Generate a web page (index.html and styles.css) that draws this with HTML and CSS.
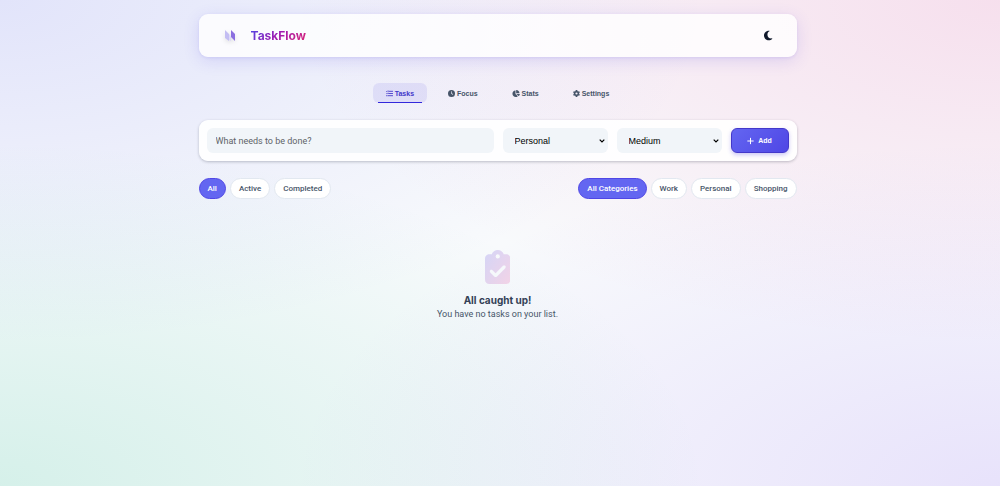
FILE: index.html
```html
<!DOCTYPE html>
<html lang="en">
<head>
    <meta charset="UTF-8">
    <meta name="viewport" content="width=device-width, initial-scale=1.0">
    <title>TaskFlow</title>
    <link rel="stylesheet" href="styles.css">
</head>
<body>
<div class="container">
    <header class="header">
        <div class="brand">
            <svg class="logo" viewBox="0 0 20 20" aria-hidden="true">
                <path d="M5 4l4 4v7l-4-3z" fill="#c3bdf3"/>
                <path d="M9 8l2 3v4l-2-1z" fill="#dcd9f8"/>
                <path d="M11 4l4 4v7l-4-4z" fill="#8b6fe0"/>
            </svg>
            <h1>TaskFlow</h1>
        </div>
        <button class="theme-toggle" type="button" aria-label="Toggle theme">
            <svg viewBox="0 0 384 512"><path d="M223.5 32C100 32 0 132.3 0 256S100 480 223.5 480c60.6 0 115.5-24.2 155.8-63.4c5-4.9 6.3-12.5 3.1-18.7s-10.1-9.7-17-8.5c-9.8 1.7-19.8 2.6-30.1 2.6c-96.9 0-175.5-78.8-175.5-176c0-65.8 36-123.1 89.3-153.3c6.1-3.5 9.2-10.5 7.7-17.3s-7.3-11.9-14.3-12.5c-6.3-.5-12.6-.8-19-.8z"/></svg>
        </button>
    </header>

    <nav class="tabs">
        <button class="tab active" type="button">
            <svg viewBox="0 0 512 512"><path d="M192 96h288M192 256h288M160 416h320" fill="none" stroke="currentColor" stroke-width="64" stroke-linecap="round"/><path d="M24 96l40 40 64-80M24 256l40 40 64-80" fill="none" stroke="currentColor" stroke-width="48" stroke-linecap="round" stroke-linejoin="round"/><circle cx="64" cy="416" r="44"/></svg>
            Tasks
        </button>
        <button class="tab" type="button">
            <svg viewBox="0 0 512 512"><path fill-rule="evenodd" d="M256 0a256 256 0 1 1 0 512A256 256 0 1 1 256 0zM232 120V256c0 8 4 15.5 10.7 20l96 64c11 7.4 25.9 4.4 33.3-6.7s4.4-25.9-6.7-33.3L280 243.2V120c0-13.3-10.7-24-24-24s-24 10.7-24 24z"/></svg>
            Focus
        </button>
        <button class="tab" type="button">
            <svg viewBox="0 0 576 512"><path d="M304 240V16.6c0-9 7-16.6 16-16.6C443.7 0 544 100.3 544 224c0 9-7.6 16-16.6 16H304zM32 272C32 150.7 122.1 50.3 239 34.3c9.2-1.3 17 6.1 17 15.4V288L412.5 444.5c6.7 6.7 6.2 17.7-1.5 23.1C371.8 495.6 323.8 512 272 512C139.5 512 32 404.6 32 272zm526.4 16c9.3 0 16.6 7.8 15.4 17c-7.7 55.9-34.6 105.6-73.9 142.3c-6 5.6-15.4 5.2-21.2-.7L320 288H558.4z"/></svg>
            Stats
        </button>
        <button class="tab" type="button">
            <svg viewBox="0 0 512 512"><path d="M495.9 166.6c3.2 8.7 .5 18.4-6.4 24.6l-43.3 39.4c1.1 8.3 1.7 16.8 1.7 25.4s-.6 17.1-1.7 25.4l43.3 39.4c6.9 6.2 9.6 15.9 6.4 24.6c-4.4 11.9-9.7 23.3-15.8 34.3l-4.7 8.1c-6.6 11-14 21.4-22.1 31.2c-5.9 7.2-15.7 9.6-24.5 6.8l-55.7-17.7c-13.4 10.3-28.2 18.9-44 25.4l-12.5 57.1c-2 9.1-9 16.3-18.2 17.8c-13.8 2.3-28 3.5-42.5 3.5s-28.7-1.2-42.5-3.5c-9.2-1.5-16.2-8.7-18.2-17.8l-12.5-57.1c-15.8-6.5-30.6-15.1-44-25.4L83.1 425.9c-8.8 2.8-18.6 .3-24.5-6.8c-8.1-9.8-15.5-20.2-22.1-31.2l-4.7-8.1c-6.1-11-11.4-22.4-15.8-34.3c-3.2-8.7-.5-18.4 6.4-24.6l43.3-39.4C64.6 273.1 64 264.6 64 256s.6-17.1 1.7-25.4L22.4 191.2c-6.9-6.2-9.6-15.9-6.4-24.6c4.4-11.9 9.7-23.3 15.8-34.3l4.7-8.1c6.6-11 14-21.4 22.1-31.2c5.9-7.2 15.7-9.6 24.5-6.8l55.7 17.7c13.4-10.3 28.2-18.9 44-25.4l12.5-57.1c2-9.1 9-16.3 18.2-17.8C227.3 1.2 241.5 0 256 0s28.7 1.2 42.5 3.5c9.2 1.5 16.2 8.7 18.2 17.8l12.5 57.1c15.8 6.5 30.6 15.1 44 25.4l55.7-17.7c8.8-2.8 18.6-.3 24.5 6.8c8.1 9.8 15.5 20.2 22.1 31.2l4.7 8.1c6.1 11 11.4 22.4 15.8 34.3zM256 336a80 80 0 1 0 0-160 80 80 0 1 0 0 160z"/></svg>
            Settings
        </button>
    </nav>

    <main>
        <form class="task-form">
            <input type="text" class="task-input" placeholder="What needs to be done?" aria-label="New task">
            <select class="task-select" aria-label="Category">
                <option>Work</option>
                <option selected>Personal</option>
                <option>Shopping</option>
            </select>
            <select class="task-select" aria-label="Priority">
                <option>Low</option>
                <option selected>Medium</option>
                <option>High</option>
            </select>
            <button class="add-btn" type="button">
                <svg viewBox="0 0 448 512"><path d="M224 80v352M48 256h352" fill="none" stroke="currentColor" stroke-width="64" stroke-linecap="round"/></svg>
                Add
            </button>
        </form>

        <div class="filters">
            <div class="filter-group">
                <button class="pill active" type="button">All</button>
                <button class="pill" type="button">Active</button>
                <button class="pill" type="button">Completed</button>
            </div>
            <div class="filter-group">
                <button class="pill active" type="button">All Categories</button>
                <button class="pill" type="button">Work</button>
                <button class="pill" type="button">Personal</button>
                <button class="pill" type="button">Shopping</button>
            </div>
        </div>

        <section class="empty-state">
            <svg viewBox="0 0 384 512" aria-hidden="true">
                <defs>
                    <linearGradient id="clip" x1="0" y1="0" x2="1" y2="1">
                        <stop offset="0" stop-color="#4f46e5"/>
                        <stop offset="1" stop-color="#ec4899"/>
                    </linearGradient>
                </defs>
                <path fill="url(#clip)" d="M192 0c-41.8 0-77.4 26.7-90.5 64H64C28.7 64 0 92.7 0 128V448c0 35.3 28.7 64 64 64H320c35.3 0 64-28.7 64-64V128c0-35.3-28.7-64-64-64H282.5C269.4 26.7 233.8 0 192 0zm0 64a32 32 0 1 1 0 64 32 32 0 1 1 0-64zM305 273L177 401c-9.4 9.4-24.6 9.4-33.9 0L79 337c-9.4-9.4-9.4-24.6 0-33.9s24.6-9.4 33.9 0l47 47L271 239c9.4-9.4 24.6-9.4 33.9 0s9.4 24.6 0 33.9z"/>
            </svg>
            <h2>All caught up!</h2>
            <p>You have no tasks on your list.</p>
        </section>
    </main>
</div>
</body>
</html>
```
FILE: styles.css
```css
* {
    box-sizing: border-box;
    margin: 0;
    padding: 0;
}

body {
    min-height: 100vh;
    padding: 14px 5px 14px 0;
    font-family: Inter, sans-serif;
    font-size: 8px;
    color: #334155;
    background:
        radial-gradient(at 0% 0%, rgba(99, 102, 241, 0.15) 0, transparent 50%),
        radial-gradient(at 100% 0%, rgba(236, 72, 153, 0.15) 0, transparent 50%),
        radial-gradient(at 100% 100%, rgba(139, 92, 246, 0.15) 0, transparent 50%),
        radial-gradient(at 0% 100%, rgba(16, 185, 129, 0.15) 0, transparent 50%),
        #f8fafc;
}

button, input, select {
    font-family: "Liberation Sans", Arial, sans-serif;
    border: none;
}

button {
    cursor: pointer;
}

svg {
    fill: currentColor;
}

.container {
    max-width: 598px;
    margin: 0 auto;
}

.header {
    display: flex;
    justify-content: space-between;
    align-items: center;
    height: 43px;
    padding: 0 21px;
    border-radius: 9px;
    background: rgba(255, 255, 255, 0.8);
    box-shadow: 0 4px 16px rgba(79, 70, 229, 0.15), 0 1px 3px rgba(79, 70, 229, 0.1);
}

.brand {
    display: flex;
    align-items: center;
    gap: 11px;
}

.logo {
    width: 20px;
    height: 20px;
    filter: drop-shadow(0 2px 2px rgba(0, 0, 0, 0.1));
}

h1 {
    font-size: 12px;
    font-weight: 700;
    background: linear-gradient(135deg, #4f46e5, #a21caf 50%, #db2777);
    background-clip: text;
    -webkit-background-clip: text;
    color: transparent;
}

.theme-toggle {
    display: flex;
    width: 14px;
    height: 14px;
    align-items: center;
    justify-content: center;
    color: #0f172a;
    background: none;
}

.theme-toggle svg {
    height: 11px;
}

.tabs {
    display: flex;
    justify-content: center;
    gap: 8px;
    margin: 26px 0 17px;
}

.tab {
    position: relative;
    display: flex;
    align-items: center;
    gap: 2px;
    height: 20px;
    padding: 0 13px;
    border-radius: 6px;
    font-size: 7px;
    font-weight: 700;
    color: #475569;
    background: none;
}

.tab svg {
    height: 7px;
}

.tab.active {
    color: #4338ca;
    background: rgba(79, 70, 229, 0.1);
}

.tab.active::after {
    content: "";
    position: absolute;
    left: 5px;
    right: 5px;
    bottom: 0;
    height: 1px;
    background: #3328dc;
}

.task-form {
    display: flex;
    gap: 9px;
    padding: 8px;
    border-radius: 9px;
    background: rgba(255, 255, 255, 0.9);
    box-shadow: 0 1px 3px rgba(15, 23, 42, 0.25);
}

.task-input, .task-select {
    height: 25px;
    border-radius: 6px;
    background: #f1f5f9;
}

.task-input {
    flex: 1;
    min-width: 0;
    padding: 0 9px;
    font-family: Roboto, sans-serif;
    font-size: 9px;
}

.task-input::placeholder {
    color: #5f6368;
}

.task-select {
    appearance: none;
    width: 105px;
    padding: 0 12px;
    font-size: 9px;
    color: #000;
    background: #f1f5f9 url("data:image/svg+xml,%3Csvg xmlns='http://www.w3.org/2000/svg' viewBox='0 0 6 4'%3E%3Cpath d='M.7.7L3 3L5.3.7' fill='none' stroke='%23000' stroke-width='1.2'/%3E%3C/svg%3E") no-repeat right 3px center / 6px 4px;
}

.add-btn {
    display: flex;
    align-items: center;
    justify-content: center;
    gap: 4px;
    width: 58px;
    height: 25px;
    border: 1px solid #4338ca;
    border-radius: 6px;
    font-size: 7px;
    font-weight: 700;
    color: #fff;
    background: linear-gradient(135deg, #6366f1, #4f46e5);
    box-shadow: 0 2px 4px rgba(79, 70, 229, 0.3);
}

.add-btn svg {
    height: 8px;
}

.filters {
    display: flex;
    justify-content: space-between;
    margin-top: 17px;
}

.filter-group {
    display: flex;
    gap: 4px;
}

.pill {
    height: 21px;
    padding: 0 8px;
    border: 1px solid #e2e8f0;
    border-radius: 11px;
    font-family: Roboto, sans-serif;
    font-size: 8px;
    font-weight: 500;
    color: #475569;
    background: #fff;
}

.pill.active {
    color: #fff;
    border-color: #4f46e5;
    background: #6366f1;
}

.empty-state {
    display: flex;
    flex-direction: column;
    align-items: center;
    padding: 51px 0;
}

.empty-state svg {
    height: 34px;
    opacity: 0.2;
}

.empty-state h2 {
    margin-top: 9px;
    font-size: 10px;
    line-height: 14px;
    font-weight: 700;
}

.empty-state p {
    font-family: Roboto, sans-serif;
    font-size: 9px;
    line-height: 14px;
    color: #475569;
}
```
